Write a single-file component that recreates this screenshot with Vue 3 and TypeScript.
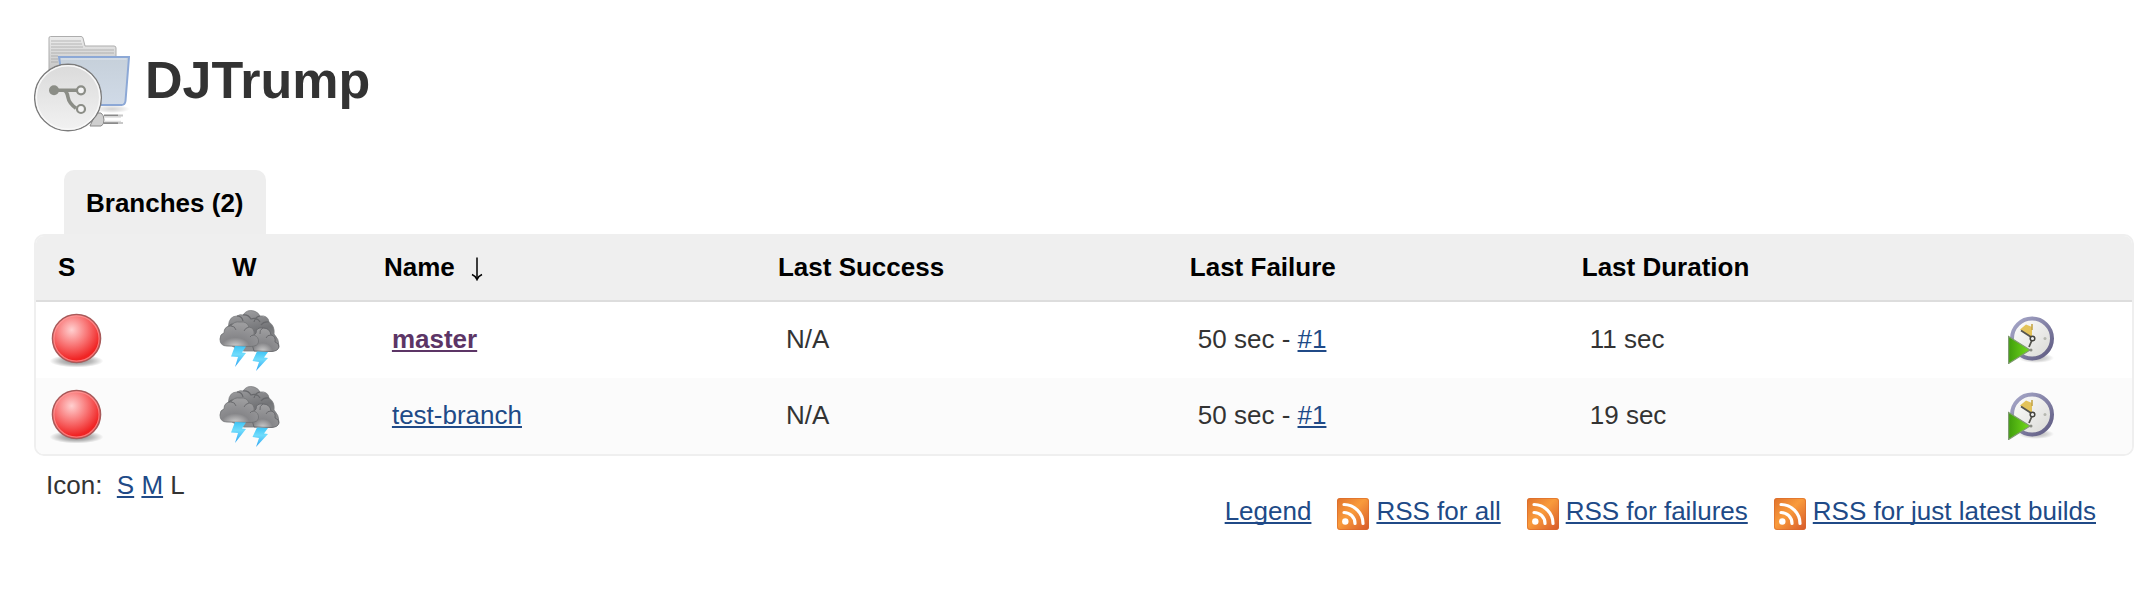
<script setup lang="ts">
interface Column {
  label: string
  share: number
  sorted?: boolean
}

interface Branch {
  name: string
  visited: boolean
  lastSuccess: string
  failedAgo: string
  failedBuild: string
  duration: string
}

const columns: Column[] = [
  { label: 'S', share: 8.3 },
  { label: 'W', share: 7.25 },
  { label: 'Name', share: 18.8, sorted: true },
  { label: 'Last Success', share: 19.65 },
  { label: 'Last Failure', share: 18.7 },
  { label: 'Last Duration', share: 21 },
  { label: '', share: 6.3 },
]

const branches: Branch[] = [
  { name: 'master', visited: true, lastSuccess: 'N/A', failedAgo: '50 sec', failedBuild: '#1', duration: '11 sec' },
  { name: 'test-branch', visited: false, lastSuccess: 'N/A', failedAgo: '50 sec', failedBuild: '#1', duration: '19 sec' },
]

const feeds: string[] = ['RSS for all', 'RSS for failures', 'RSS for just latest builds']
</script>

<template>
  <main class="page">
    <svg class="defs" width="0" height="0" aria-hidden="true">
      <defs>
        <radialGradient id="ball" cx="0.4" cy="0.32" r="0.62">
          <stop offset="0" stop-color="#ffd0d0" />
          <stop offset="0.5" stop-color="#f97a7a" />
          <stop offset="1" stop-color="#f02424" />
        </radialGradient>
        <radialGradient id="shade">
          <stop offset="0" stop-color="#000" stop-opacity="0.5" />
          <stop offset="0.6" stop-color="#000" stop-opacity="0.25" />
          <stop offset="1" stop-color="#000" stop-opacity="0" />
        </radialGradient>
        <linearGradient id="cloud" x1="0" y1="0" x2="0.3" y2="1">
          <stop offset="0" stop-color="#a6a6a8" />
          <stop offset="0.6" stop-color="#737477" />
          <stop offset="1" stop-color="#8e8e90" />
        </linearGradient>
        <radialGradient id="puff" cx="0.4" cy="1" r="0.9">
          <stop offset="0" stop-color="#cfcfcf" />
          <stop offset="0.4" stop-color="#868689" />
          <stop offset="1" stop-color="#9c9c9e" />
        </radialGradient>
        <linearGradient id="bolt" x1="0" y1="0" x2="0" y2="1">
          <stop offset="0" stop-color="#3fc4f5" />
          <stop offset="0.4" stop-color="#6fdcfc" />
          <stop offset="1" stop-color="#2fa4f2" />
        </linearGradient>
        <linearGradient id="rim" x1="0" y1="0" x2="1" y2="1">
          <stop offset="0" stop-color="#a9aacb" />
          <stop offset="1" stop-color="#5d5980" />
        </linearGradient>
        <linearGradient id="face" x1="0" y1="0" x2="1" y2="1">
          <stop offset="0" stop-color="#ffffff" />
          <stop offset="1" stop-color="#d8d8d4" />
        </linearGradient>
        <linearGradient id="play" x1="0" y1="0" x2="1" y2="0">
          <stop offset="0" stop-color="#3f9d0c" />
          <stop offset="1" stop-color="#74dc1c" />
        </linearGradient>
        <linearGradient id="feed" x1="0" y1="0" x2="1" y2="1">
          <stop offset="0" stop-color="#e0722c" />
          <stop offset="0.45" stop-color="#f99b3c" />
          <stop offset="1" stop-color="#d6582a" />
        </linearGradient>
      </defs>
    </svg>

    <header class="heading">
      <svg class="project-icon" viewBox="0 0 96 96" aria-hidden="true">
        <defs>
          <linearGradient id="back" x1="0" y1="0" x2="0" y2="1">
            <stop offset="0" stop-color="#ececec" />
            <stop offset="1" stop-color="#a8a8a8" />
          </linearGradient>
          <linearGradient id="front" x1="0" y1="0" x2="0" y2="1">
            <stop offset="0" stop-color="#c6d0da" />
            <stop offset="1" stop-color="#d0dae7" />
          </linearGradient>
          <linearGradient id="disc" x1="0" y1="0" x2="0" y2="1">
            <stop offset="0" stop-color="#dadada" />
            <stop offset="1" stop-color="#f2f2f2" />
          </linearGradient>
        </defs>
        <path d="M15 60V2q0-1.500 1.500-1.500H47q1.500 0 2 1.500l2 8H80q2 0 2 2V60z" fill="url(#back)" stroke="#adadad" />
        <path d="M17 5H47M17 8H48M17 11H49M17 14H80M17 17H80M17 20H24M17 23H24M17 26H24" stroke="#999" stroke-width="1" opacity="0.6" />
        <ellipse cx="78" cy="73" rx="18" ry="4" fill="url(#shade)" opacity="0.35" />
        <path d="M56 90h11q3-1 3-6t-3-7h-5z" fill="#cfcfcf" stroke="#8a8a8a" />
        <path d="M70 79.500H84M70 87H84" stroke="#8a8a8a" stroke-width="2" />
        <path d="M70 81H87M70 85.500H87" stroke="#dedede" stroke-width="1.500" />
        <path d="M84 79.500H89M84 87H89" stroke="#c8c8c8" stroke-width="2" />
        <path d="M25 21H95L91.500 65q-.5 4-4 4H32z" fill="url(#front)" stroke="#8ca8d6" stroke-width="2" />
        <path d="M27 23H92.700" stroke="#dfe6ef" />
        <circle cx="34" cy="61.500" r="33.300" fill="url(#disc)" stroke="#7c7c7c" stroke-width="1.500" />
        <circle cx="34" cy="61.500" r="31.800" fill="none" stroke="#f8f8f8" stroke-width="1.600" />
        <path d="M20 54.300H43M30 54.300q3 1 4 7t8 11" fill="none" stroke="#8b8d86" stroke-width="3.600" />
        <circle cx="20" cy="54.300" r="5" fill="#8b8d86" />
        <circle cx="47" cy="54.300" r="4" fill="#f4f4f4" stroke="#8b8d86" stroke-width="2.200" />
        <circle cx="47" cy="73" r="4" fill="#f4f4f4" stroke="#8b8d86" stroke-width="2.200" />
      </svg>
      <h1>DJTrump</h1>
    </header>

    <nav class="tabs" aria-label="Views">
      <a class="tab" href="#branches">Branches (2)</a>
    </nav>

    <table id="branches" class="branches">
      <colgroup>
        <col v-for="column in columns" :key="column.label" :style="{ width: column.share + '%' }" />
      </colgroup>
      <thead>
        <tr>
          <th
            v-for="column in columns"
            :key="column.label"
            scope="col"
            :aria-sort="column.sorted ? 'descending' : undefined"
          >
            <a v-if="column.label" class="sort" href="#branches">
              {{ column.label }}
              <svg v-if="column.sorted" class="arrow" viewBox="0 0 12 24" aria-hidden="true">
                <path d="M6 0.500V22" stroke="#000" stroke-width="1.500" />
                <path d="M1 17.500Q4.500 19 6 22.500Q7.500 19 11 17.500" fill="none" stroke="#000" stroke-width="1.600" />
              </svg>
            </a>
          </th>
        </tr>
      </thead>
      <tbody>
        <tr v-for="branch in branches" :key="branch.name">
          <td class="symbol">
            <svg class="large" viewBox="0 0 64 64" role="img" aria-label="Failed">
              <ellipse cx="32.500" cy="53" rx="27" ry="6.500" fill="url(#shade)" />
              <circle cx="32.500" cy="30.500" r="24" fill="url(#ball)" stroke="#a85a5a" stroke-width="1.600" />
              <circle cx="32.500" cy="30.500" r="22.600" fill="none" stroke="#ff9c9c" stroke-width="1.200" opacity="0.7" />
            </svg>
          </td>
          <td class="symbol">
            <svg class="large" viewBox="0 0 64 64" role="img" aria-label="Stormy">
              <path d="M8 30Q6 22 10.500 18Q11 8 19 8Q22 6 25 7Q29 1 36 3Q40 4 42 8Q50 7 51 14Q57 18 56 26Q61 31 61 38Q60 43 52 43H26Q12 40 8 30z" fill="url(#cloud)" stroke="#7c7d80" stroke-width="0.8" />
              <path d="M11 18q3-3 7-2M19 8q5 0 6 5M25 7q5-1 8 4q6-2 9 3M42 8q-5 1-6 6M51 14q-5-1-8 3" fill="none" stroke="#67686b" stroke-width="1.200" />
              <path d="M36 43Q31 30 38 25Q38 19 45 20Q52 20 53 27Q58 28 57 34Q61 35 61 39Q60 43 54 43.500z" fill="url(#puff)" stroke="#606164" stroke-width="0.8" />
              <path d="M9 38Q2 38 2 31Q2 26 6 25Q6 18 13 18Q16 13 22 14Q29 13 31 19Q37 20 36 27Q41 29 40.500 34Q40 38 33 38.500z" fill="url(#puff)" stroke="#707174" stroke-width="0.8" />
              <path d="M13 18q4 0 5 4M31 19q-4 1-5 4M36 27q-3 0-4 2M45 20q-4 2-3 6M53 27q-4 0-5 3" fill="none" stroke="#6b6c6f" />
              <path d="M17 38L28 38.500L24 44.500L28 45L17 59L20 49L13 48.500z" fill="url(#bolt)" />
              <path d="M39 43.500L50 44L46 49.500L50 50L38 63L41 54L34.500 53z" fill="url(#bolt)" />
            </svg>
          </td>
          <td><a href="#" :class="{ visited: branch.visited }">{{ branch.name }}</a></td>
          <td>{{ branch.lastSuccess }}</td>
          <td>{{ branch.failedAgo }} - <a href="#">{{ branch.failedBuild }}</a></td>
          <td>{{ branch.duration }}</td>
          <td class="symbol">
            <button class="build" type="button" :aria-label="'Schedule a build for ' + branch.name">
              <svg class="clock" viewBox="0 0 48 48" aria-hidden="true">
                <ellipse cx="28" cy="42" rx="18" ry="5" fill="url(#shade)" opacity="0.6" />
                <circle cx="24" cy="22.500" r="20" fill="url(#face)" stroke="url(#rim)" stroke-width="4" />
                <path d="M24 22L12 13.500L18 8.500L24 11z" fill="#e3c35a" />
                <path d="M24 8V14" stroke="#c5a548" stroke-width="1.600" />
                <path d="M13 14.500L23 21M24 24L21 31" fill="none" stroke="#55554f" stroke-width="1.800" />
                <circle cx="24.500" cy="22.500" r="2.300" fill="#eee" stroke="#44443f" stroke-width="1.500" />
                <circle cx="37" cy="22.500" r="1.500" fill="#b6b8b0" />
                <path d="M0.600 20.500L22 34L0.600 47.500z" fill="url(#play)" stroke="#7f9a70" stroke-width="1.200" />
                <circle cx="23" cy="34" r="1.500" fill="#8a8c84" />
              </svg>
            </button>
          </td>
        </tr>
      </tbody>
    </table>

    <footer class="foot">
      <p class="sizes">Icon:&nbsp; <a href="#">S</a> <a href="#">M</a> L</p>
      <nav class="feeds" aria-label="Feeds">
        <a href="#">Legend</a>
        <span v-for="feed in feeds" :key="feed" class="feed">
          <svg class="feed-icon" viewBox="0 0 32 32" aria-hidden="true">
            <rect width="32" height="32" rx="3" fill="url(#feed)" />
            <rect x="0.500" y="0.500" width="31" height="31" rx="2.500" fill="none" stroke="#d9692c" opacity="0.6" />
            <circle cx="8.300" cy="23.500" r="3.200" fill="#fff" />
            <path d="M7 14.500A11 11 0 0 1 18 25.500M7 6.500A19 19 0 0 1 26 25.500" fill="none" stroke="#fff" stroke-width="3.200" stroke-linecap="round" />
          </svg>
          <a href="#">{{ feed }}</a>
        </span>
      </nav>
    </footer>
  </main>
</template>

<style>
body {
  background: #fff;
}
</style>

<style scoped>
.page {
  padding: 36px 22px 36px 34px;
  color: #333;
  font: 26px/32px "Liberation Sans", Helvetica, Arial, sans-serif;
}

.defs {
  position: absolute;
}

a {
  color: #204a87;
  text-decoration: underline 2px;
  text-underline-offset: 2px;
  text-decoration-skip-ink: none;
}

a.visited {
  color: #5c3566;
  font-weight: bold;
}

.heading {
  display: flex;
  align-items: flex-start;
  gap: 15px;
}

.project-icon {
  flex: none;
  width: 96px;
  height: 96px;
}

h1 {
  margin: 0;
  font-size: 52px;
  line-height: 88px;
}

.tabs {
  display: flex;
  margin-top: 38px;
  padding-left: 30px;
}

.tab {
  padding: 17px 22px 15px;
  border-radius: 10px 10px 0 0;
  background: #eee;
  color: #000;
  font-weight: bold;
  text-decoration: none;
}

.branches {
  width: 100%;
  border: 2px solid #efefef;
  border-radius: 10px;
  border-spacing: 0;
  table-layout: fixed;
  overflow: hidden;
}

th {
  height: 62px;
  padding: 0 22px 2px;
  border-bottom: 2px solid #ddd;
  background: #efefef;
  text-align: left;
}

.sort {
  display: flex;
  align-items: center;
  gap: 16px;
  color: #000;
  text-decoration: none;
}

.arrow {
  width: 12px;
  height: 24px;
  margin-top: 4px;
}

td {
  padding: 5px 30px 7px;
}

td.symbol {
  padding: 6px 8px;
}

tbody tr:nth-child(even) {
  background: #fbfbfb;
}

.large {
  display: block;
  width: 64px;
  height: 64px;
}

.build {
  display: block;
  padding: 0;
  border: 0;
  background: none;
  cursor: pointer;
}

.clock {
  display: block;
  width: 48px;
  height: 48px;
}

.foot {
  display: flex;
  justify-content: space-between;
  padding: 13px 38px 0 12px;
}

.sizes {
  margin: 0;
}

.feeds {
  display: flex;
  gap: 26px;
  padding-top: 26px;
}

.feed {
  display: flex;
  gap: 7px;
}

.feed-icon {
  width: 32px;
  height: 32px;
  margin-top: 3px;
}
</style>
